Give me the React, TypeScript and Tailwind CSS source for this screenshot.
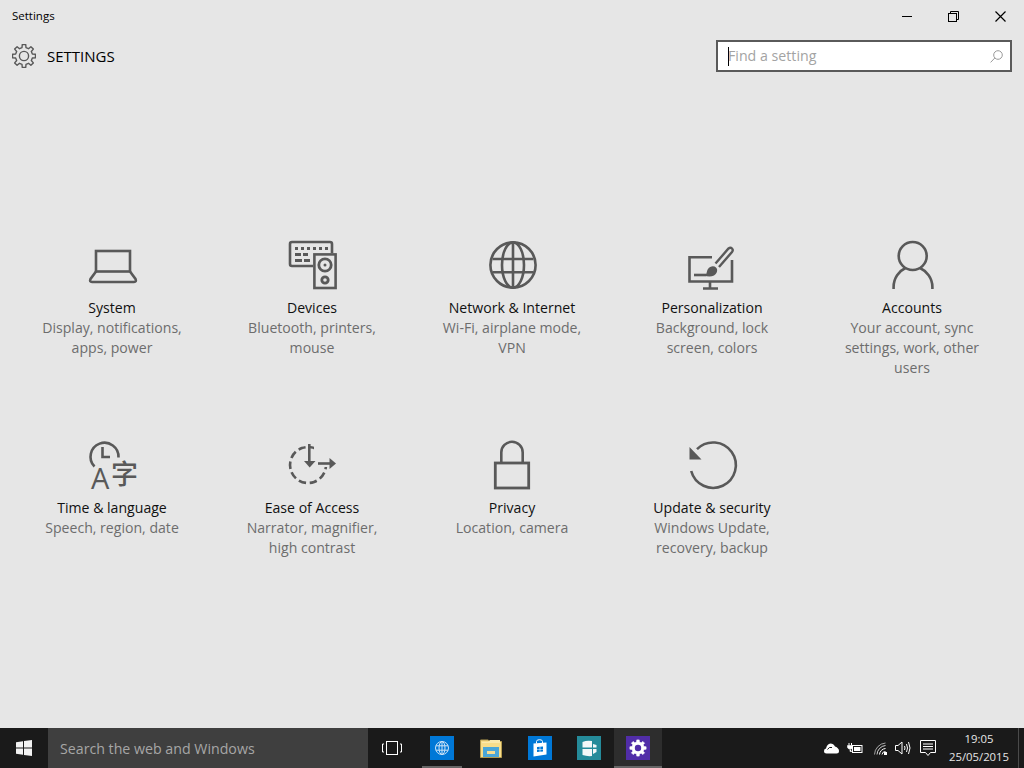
import React from "react";

const C = "#595959";

function gearPath(cx: number, cy: number, ro: number, ri: number, teeth = 8) {
  const pts: string[] = [];
  const step = (Math.PI * 2) / teeth;
  for (let i = 0; i < teeth; i++) {
    const a = i * step - Math.PI / 2;
    const w = step * 0.19;
    const w2 = step * 0.3;
    const p = (ang: number, r: number) =>
      `${(cx + r * Math.cos(ang)).toFixed(2)} ${(cy + r * Math.sin(ang)).toFixed(2)}`;
    pts.push(`${i === 0 ? "M" : "L"}${p(a - w2, ri)}`);
    pts.push(`L${p(a - w, ro)}`);
    pts.push(`L${p(a + w, ro)}`);
    pts.push(`L${p(a + w2, ri)}`);
  }
  return pts.join(" ") + " Z";
}

const Svg = ({ children }: { children: React.ReactNode }) => (
  <svg width="50" height="50" viewBox="0 0 50 50" fill="none" stroke={C} strokeWidth="2.6" className="block overflow-visible">
    {children}
  </svg>
);

const icons: Record<string, React.ReactNode> = {
  system: (
    <Svg>
      <rect x="8" y="11" width="34" height="20.5" />
      <path d="M8 31.5 L2.5 39 Q1.2 42 4 42 H46 Q48.8 42 47.5 39 L42 31.5" />
    </Svg>
  ),
  devices: (
    <Svg>
      <path d="M25 26 H4 Q2 26 2 24 V4 Q2 2 4 2 H42 Q44 2 44 4 V13" />
      <g fill={C} stroke="none">
        <rect x="7" y="7" width="3" height="3" />
        <rect x="13" y="7" width="3" height="3" />
        <rect x="19" y="7" width="3" height="3" />
        <rect x="25" y="7" width="3" height="3" />
        <rect x="31" y="7" width="3" height="3" />
        <rect x="37" y="7" width="3" height="3" />
        <rect x="7" y="13" width="6" height="3" />
        <rect x="15" y="13" width="5" height="3" />
        <rect x="7" y="19" width="7" height="3" />
        <rect x="16" y="19" width="6" height="3" />
      </g>
      <rect x="26.4" y="14.4" width="21.2" height="33.6" />
      <circle cx="37" cy="25" r="6.2" strokeWidth="2.8" />
      <circle cx="37" cy="25" r="1.5" fill={C} stroke="none" />
      <circle cx="37" cy="40" r="3.2" strokeWidth="2.8" />
    </Svg>
  ),
  network: (
    <Svg>
      <circle cx="25" cy="25" r="22.6" />
      <ellipse cx="25" cy="25" rx="11" ry="22.6" />
      <path d="M25 2 V48 M4.5 19 H45.5 M4.5 32.3 H45.5" />
    </Svg>
  ),
  personalization: (
    <Svg>
      <path d="M24 17.3 H1.5 V41.5 H44 V20" />
      <path d="M6 35 H18" />
      <path d="M22 42 V48 M15 48.5 H30" />
      <path d="M27.5 23.5 L40.5 8.5 Q42.5 7 44 8.5 Q45.5 10 44 12 L31 27" strokeWidth="2.4" />
      <path d="M16 35.5 C19 35.5 18.5 31 20 29 C22 26 26 25.5 28 27.5 C30.5 30 28.5 34 26 35.5 C23 37 19 36.5 16 35.5 Z" fill={C} stroke="none" />
    </Svg>
  ),
  accounts: (
    <Svg>
      <circle cx="24.7" cy="16" r="14" />
      <path d="M5.6 49 V47 C5.6 38 11 31 17.5 28 M44.4 49 V47 C44.4 38 38.5 31 32 28" />
    </Svg>
  ),
  time: (
    <Svg>
      <path d="M6.5 26.5 A14 14 0 1 1 30.5 17.5" />
      <path d="M14.5 7 V17 H22" />
      <text x="3" y="49" fontFamily="'Open Sans', sans-serif" fontSize="29" fill={C} stroke="none">A</text>
      <text x="23" y="43.5" fontFamily="'Noto Sans CJK SC', sans-serif" fontSize="27" fontWeight="500" fill={C} stroke="none">字</text>
    </Svg>
  ),
  ease: (
    <Svg>
      <circle cx="20" cy="25" r="18" strokeDasharray="7.5 3.6" strokeDashoffset="-3" transform="rotate(-20 20 25)" />
      <rect x="26" y="2" width="24" height="16" fill="#e6e6e6" stroke="none" />
      <rect x="33" y="14" width="18" height="13" fill="#e6e6e6" stroke="none" />
      <path d="M21.3 4 V22" />
      <path d="M16 21 H27.5 L21.7 27.5 Z" fill={C} stroke="none" />
      <path d="M30 23.5 H43" />
      <path d="M41.5 18 V29 L48 23.5 Z" fill={C} stroke="none" />
    </Svg>
  ),
  privacy: (
    <Svg>
      <rect x="7.3" y="23" width="33.4" height="25" strokeWidth="2.8" />
      <path d="M13.3 23 V12.5 A10.7 10.7 0 0 1 34.7 12.5 V23" />
    </Svg>
  ),
  update: (
    <Svg>
      <path d="M3.2 31 A22.7 22.7 0 1 0 9 9.2" />
      <path d="M1.5 7 V19.5 H13.5 Z" fill={C} stroke="none" />
    </Svg>
  ),
};

const items = [
  { icon: "system", title: "System", sub: ["Display, notifications,", "apps, power"] },
  { icon: "devices", title: "Devices", sub: ["Bluetooth, printers,", "mouse"] },
  { icon: "network", title: "Network & Internet", sub: ["Wi-Fi, airplane mode,", "VPN"] },
  { icon: "personalization", title: "Personalization", sub: ["Background, lock", "screen, colors"] },
  { icon: "accounts", title: "Accounts", sub: ["Your account, sync", "settings, work, other", "users"] },
  { icon: "time", title: "Time & language", sub: ["Speech, region, date"] },
  { icon: "ease", title: "Ease of Access", sub: ["Narrator, magnifier,", "high contrast"] },
  { icon: "privacy", title: "Privacy", sub: ["Location, camera"] },
  { icon: "update", title: "Update & security", sub: ["Windows Update,", "recovery, backup"] },
];

function Tile({ item }: { item: (typeof items)[number] }) {
  return (
    <div className="flex flex-col items-center">
      <div className="h-[50px] w-12 mb-2">{icons[item.icon]}</div>
      <div className="text-[14.1px] leading-5 text-[#111]">{item.title}</div>
      {item.sub.map((s) => (
        <div key={s} className="text-[14.1px] leading-5 text-[#6d6d6d]">{s}</div>
      ))}
    </div>
  );
}

export default function App() {
  return (
    <div className="w-[1024px] h-[768px] overflow-hidden flex flex-col bg-[#e6e6e6] font-['Open_Sans',sans-serif]">
      {/* title bar */}
      <div className="h-8 flex items-center pl-3 shrink-0">
        <span className="text-[11.5px] text-black">Settings</span>
        <div className="ml-auto flex items-center">
          <svg width="10" height="10" viewBox="0 0 10 10" className="mr-9"><path d="M0 5.5 H10" stroke="#000" strokeWidth="1" /></svg>
          <svg width="11" height="11" viewBox="0 0 11 11" fill="none" stroke="#000" className="mr-9">
            <rect x="0.5" y="2.5" width="8" height="8" />
            <path d="M2.5 2.5 V0.5 H10.5 V8.5 H8.5" />
          </svg>
          <svg width="11" height="11" viewBox="0 0 11 11" className="mr-[18px]"><path d="M0.5 0.5 L10.5 10.5 M10.5 0.5 L0.5 10.5" stroke="#000" strokeWidth="1.2" /></svg>
        </div>
      </div>
      {/* header */}
      <div className="h-[48px] flex items-start pl-3 pr-3 pt-2 shrink-0">
        <div className="flex items-center h-8">
          <svg width="24" height="24" viewBox="0 0 24 24" fill="none" stroke={C} strokeWidth="1.4" className="mr-[11px]">
            <path d={gearPath(12, 12, 11.6, 8.6)} strokeLinejoin="round" />
            <circle cx="12" cy="12" r="4.6" />
          </svg>
          <span className="text-[15px] leading-5 text-black">SETTINGS</span>
        </div>
        <div className="ml-auto w-[296px] h-8 border-2 border-[#5a5a5a] bg-white flex items-center pl-[10px] pr-[7px]">
          <div className="w-px h-[19px] bg-black -mr-px" />
          <span className="text-[14.2px] text-[#a3a3a3] leading-5">Find a setting</span>
          <svg width="13" height="13" viewBox="0 0 13 13" fill="none" stroke="#9a9a9a" className="ml-auto">
            <circle cx="8" cy="5" r="4.3" />
            <path d="M4.8 8 L0.6 12.4" />
          </svg>
        </div>
      </div>
      {/* grid */}
      <main className="flex-1 pt-[160px] pl-3">
        <div className="grid grid-cols-[repeat(5,200px)] auto-rows-[200px]">
          {items.map((it) => (
            <Tile key={it.icon} item={it} />
          ))}
        </div>
      </main>
      {/* taskbar */}
      <footer className="h-10 shrink-0 flex bg-[#1a1a1a] items-stretch">
        <div className="w-12 flex items-center justify-center">
          <svg width="16" height="16" viewBox="0 0 16 16" fill="#f2f2f2">
            <path d="M0 2.3 L7 1.3 V7.5 H0 Z M8 1.1 L16 0 V7.5 H8 Z M0 8.5 H7 V14.7 L0 13.7 Z M8 8.5 H16 V16 L8 14.9 Z" />
          </svg>
        </div>
        <div className="w-[320px] bg-[#3f3f3f] flex items-center pl-3 pt-px text-[14.2px] text-[#a6a6a6]">Search the web and Windows</div>
        <div className="w-12 flex items-center justify-center">
          <svg width="20" height="14" viewBox="0 0 20 14" fill="none" stroke="#fff" strokeWidth="1">
            <rect x="4.5" y="0.5" width="11" height="13" />
            <path d="M2 3 H0.5 V11 H2 M18 3 H19.5 V11 H18" />
          </svg>
        </div>
        <div className="w-12 ml-0.5 flex justify-center">
          <div className="w-10 flex items-center justify-center border-b-2 border-[#666]">
            <div className="w-6 h-6 bg-[#0078d7] flex items-center justify-center mt-0.5">
              <svg width="16" height="16" viewBox="0 0 16 16" fill="none" stroke="#cfe4f7" strokeWidth="1">
                <circle cx="8" cy="8" r="6.5" />
                <ellipse cx="8" cy="8" rx="3" ry="6.5" />
                <path d="M8 1.5 V14.5 M2 5.8 H14 M2 10.2 H14" />
              </svg>
            </div>
          </div>
        </div>
        <div className="w-12 ml-px flex items-center justify-center">
          <svg width="22" height="20" viewBox="0 0 22 20">
            <path d="M0.5 2 H8 L10 3.5 H21.5 V19.5 H0.5 Z" fill="#f8dd8a" stroke="#b39a4e" />
            <path d="M2 4 H8 L10 2 H20 V5 H2 Z" fill="#fbe9ac" />
            <path d="M3 9 H19 V19 H3 Z" fill="#4aa6d8" />
            <path d="M7 13 H15 V16 H7 Z" fill="#f6dc92" />
          </svg>
        </div>
        <div className="w-12 ml-px flex items-center justify-center">
          <div className="w-6 h-6 bg-[#0078d7] flex items-center justify-center">
            <svg width="14" height="18" viewBox="0 0 14 18">
              <path d="M3.5 4.5 V2.5 Q3.5 0.7 6.5 0.7 Q9.5 0.7 9.5 2.5 V4" fill="none" stroke="#fff" />
              <path d="M0.5 4.5 L13.5 3.6 V15.5 L0.5 17.5 Z" fill="#fff" />
              <path d="M4 8 L10 7.5 V12.5 L4 13 Z" fill="#0078d7" />
              <path d="M6.7 7.5 H7.3 V13 H6.7 Z M4 10 H10 V10.5 H4 Z" fill="#fff" />
            </svg>
          </div>
        </div>
        <div className="w-12 ml-px flex items-center justify-center">
          <div className="w-6 h-6 bg-[#258b9a] flex items-center justify-center">
            <svg width="15" height="17" viewBox="0 0 15 17" fill="#f4f8f8">
              <path d="M0.5 2 Q5 0 10 1 V7.5 H0.5 Z M11 4 L14.5 5 V7.5 H11 Z M0.5 9 H10 V16 Q5 16.5 0.5 15 Z M11 9 H14.5 V12 L11 14 Z" />
            </svg>
          </div>
        </div>
        <div className="w-12 ml-px flex items-center justify-center bg-[#2d2d2d] border-b-2 border-[#666]">
          <div className="w-6 h-6 bg-[#512da8] flex items-center justify-center mt-0.5">
            <svg width="18" height="18" viewBox="0 0 18 18">
              <path d={gearPath(9, 9, 8.2, 6.1)} fill="#fff" stroke="#fff" strokeWidth="0.6" strokeLinejoin="round" />
              <circle cx="9" cy="9" r="3.2" fill="#512da8" />
            </svg>
          </div>
        </div>
        {/* tray */}
        <div className="ml-auto flex items-center">
          <svg width="15" height="11" viewBox="0 0 15 11" fill="#fff" className="mr-2">
            <path d="M2.5 10.5 Q0 10.5 0 8 Q0 6 2 5.6 Q3 1 6.5 0.5 Q9.5 0.5 11 3.5 Q15 5 15 8 Q15 10.5 12.5 10.5 Z" />
            <path d="M3.5 6.5 Q5 3.5 8 4.5" fill="none" stroke="#1a1a1a" strokeWidth="1" />
          </svg>
          <svg width="16" height="11" viewBox="0 0 16 11" fill="none" stroke="#fff" className="mr-[11px]">
            <path d="M2 0 V2.5 M4.5 0 V2.5" />
            <path d="M0.5 2.5 H5.5 V4.5 Q5.5 6 3 6 Q1 6 0.5 4.5 Z M3 6 V8.5 H5" fill="#fff" strokeWidth="0.6" />
            <rect x="5.5" y="2.5" width="9.5" height="7" />
            <rect x="7" y="4" width="6.5" height="4" fill="#fff" stroke="none" />
          </svg>
          <svg width="13" height="13" viewBox="0 0 13 13" fill="none" stroke="#fff" className="mr-2">
            <path d="M0.5 12.5 A12 12 0 0 1 11.5 1" opacity="0.6" />
            <path d="M3 12.5 A9.5 9.5 0 0 1 11.5 3.5" opacity="0.8" />
            <path d="M5.5 12.5 A6.5 6.5 0 0 1 11.5 6.5" />
            <path d="M8 12.5 A3.5 3.5 0 0 1 11.5 9.5" />
            <rect x="10" y="10" width="3" height="3" fill="#fff" stroke="none" />
          </svg>
          <svg width="16" height="14" viewBox="0 0 16 14" fill="none" stroke="#fff" className="mr-[9px]">
            <path d="M0.5 4.5 H3 L7 1 V13 L3 9.5 H0.5 Z" />
            <path d="M9.5 5 Q10.5 7 9.5 9 M11.5 3 Q13.5 7 11.5 11 M13.5 1 Q16.5 7 13.5 13" />
          </svg>
          <svg width="16" height="17" viewBox="0 0 16 17" fill="none" stroke="#fff" className="mr-[13px]">
            <path d="M0.5 0.5 H15.5 V12.5 H10.5 L8 15.5 L5.5 12.5 H0.5 Z" />
            <path d="M3 4 H13 M3 6.5 H13 M3 9 H13" />
          </svg>
          <div className="w-[60px] text-center text-[11.3px] leading-[18px] text-[#e6e6e6] whitespace-nowrap">
            <div>19:05</div>
            <div>25/05/2015</div>
          </div>
          <div className="w-px h-full bg-[#4a4a4a] ml-[9px] mr-[5px]" />
        </div>
      </footer>
    </div>
  );
}
